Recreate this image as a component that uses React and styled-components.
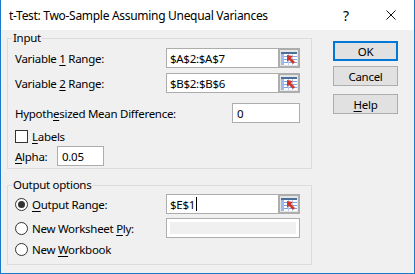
import React from 'react';
import styled, { createGlobalStyle } from 'styled-components';

const Global = createGlobalStyle`
  html, body { margin: 0; padding: 0; background: #ffffff; }
  body { font-family: "Noto Sans", "Open Sans", sans-serif; font-size: 11.5px; letter-spacing: -0.28px; color: #000; }
  * { box-sizing: border-box; }
  u { text-decoration-thickness: 1px; text-underline-offset: 2px; }
`;

const Window = styled.div`
  width: 415px;
  height: 274px;
  border: 1px solid #1979ca;
  border-top: none;
  display: flex;
  flex-direction: column;
  background: #f0f0f0;
`;

const TitleBar = styled.div`
  height: 30px;
  background: #ffffff;
  display: flex;
  align-items: center;
  padding-left: 8px;
`;

const Title = styled.div`
  font-size: 12px;
  letter-spacing: -0.3px;
  flex: 1;
  padding-top: 1px;
`;

const HelpMark = styled.div`
  font-size: 14px;
  width: 16px;
  text-align: center;
  margin-right: 32px;
`;

const CloseBox = styled.div`
  width: 10px;
  height: 10px;
  margin-right: 18px;
  display: flex;
`;

const Body = styled.div`
  flex: 1;
  display: flex;
  padding-left: 6px;
`;

const LeftCol = styled.div`
  width: 305px;
  display: flex;
  flex-direction: column;
  padding-top: 8px;
`;

const Group = styled.div`
  position: relative;
  border: 1px solid #dcdcdc;
  height: ${p => p.$h}px;
  margin-top: ${p => p.$mt || 0}px;
  padding: ${p => p.$pt}px 11px 0 7px;
  display: flex;
  flex-direction: column;
`;

const Legend = styled.span`
  position: absolute;
  top: -9px;
  left: 4px;
  padding: 0 1px;
  background: #f0f0f0;
  line-height: 16px;
`;

const Row = styled.div`
  display: flex;
  align-items: center;
  height: ${p => p.$h || 20}px;
  margin-top: ${p => p.$mt || 0}px;
`;

const Label = styled.span`
  width: ${p => (p.$w ? `${p.$w}px` : 'auto')};
  flex-shrink: 0;
  white-space: nowrap;
  margin-left: ${p => p.$ml || 0}px;
`;

const RefEdit = styled.div`
  margin-left: auto;
  width: 134px;
  height: 20px;
  display: flex;
  border: 1px solid #adadad;
  background: #ffffff;
`;

const RefText = styled.div`
  flex: 1;
  padding-left: 3px;
  display: flex;
  align-items: center;
`;

const Caret = styled.span`
  display: inline-block;
  width: 1px;
  height: 14px;
  background: #000;
  margin-left: 1px;
`;

const RefButton = styled.div`
  width: 22px;
  margin: -1px -1px -1px 0;
  border: 2px solid #adadad;
  background: #e6e6e6;
  display: flex;
  align-items: center;
  justify-content: center;
`;

const TextBox = styled.div`
  margin-left: ${p => (p.$auto ? 'auto' : '0')};
  width: ${p => p.$w}px;
  height: 20px;
  border: 1px solid #adadad;
  background: #ffffff;
  padding-left: 4px;
  display: flex;
  align-items: center;
`;

const DisabledBox = styled.div`
  margin-left: auto;
  width: 134px;
  height: 20px;
  border: 1px solid #adadad;
  background: #ffffff;
  padding: 3px 3px;
  display: flex;
`;

const DisabledFill = styled.div`
  flex: 1;
  background: #f0f0f0;
`;

const CheckBox = styled.div`
  width: 13px;
  height: 13px;
  border: 1px solid #333333;
  background: #ffffff;
  flex-shrink: 0;
`;

const Radio = styled.div`
  width: 13px;
  height: 13px;
  border-radius: 50%;
  border: 1px solid #333333;
  background: #ffffff;
  flex-shrink: 0;
  display: flex;
  align-items: center;
  justify-content: center;
  &::after {
    content: '';
    display: ${p => (p.$on ? 'block' : 'none')};
    width: 7px;
    height: 7px;
    border-radius: 50%;
    background: #333333;
  }
`;

const ButtonCol = styled.div`
  margin-left: 21px;
  width: 65px;
  padding-top: 11px;
  display: flex;
  flex-direction: column;
`;

const Button = styled.div`
  height: 20px;
  margin-top: ${p => p.$mt || 0}px;
  background: #e1e1e1;
  border: ${p => (p.$default ? '2px solid #0078d7' : '1px solid #adadad')};
  display: flex;
  align-items: center;
  justify-content: center;
`;

const RefIcon = () => (
  <svg width="16" height="13" viewBox="0 0 16 13">
    <rect x="0" y="0" width="16" height="13" fill="#ffffff" />
    <rect x="0" y="0" width="16" height="2" fill="#4d6f9c" />
    <rect x="0" y="2" width="3" height="11" fill="#9cbbe6" />
    <rect x="3" y="4" width="13" height="1" fill="#7fa6dc" />
    <rect x="3" y="7" width="13" height="1" fill="#7fa6dc" />
    <rect x="3" y="10" width="13" height="1" fill="#7fa6dc" />
    <rect x="7" y="2" width="1" height="11" fill="#b9cdea" />
    <rect x="11" y="2" width="1" height="11" fill="#b9cdea" />
    <polygon points="6,3 12,4 10,6 14,10 12,12 8,8 6,10" fill="#d2362b" />
  </svg>
);

export default function App() {
  return (
    <>
      <Global />
      <Window>
        <TitleBar>
          <Title>t-Test: Two-Sample Assuming Unequal Variances</Title>
          <HelpMark>?</HelpMark>
          <CloseBox>
            <svg width="10" height="10" viewBox="0 0 10 10">
              <path d="M0.5 0.5 L9.5 9.5 M9.5 0.5 L0.5 9.5" stroke="#111" strokeWidth="1" />
            </svg>
          </CloseBox>
        </TitleBar>
        <Body>
          <LeftCol>
            <Group $h={131} $pt={9}>
              <Legend>Input</Legend>
              <Row>
                <Label>Variable <u>1</u> Range:</Label>
                <RefEdit>
                  <RefText>$A$2:$A$7</RefText>
                  <RefButton><RefIcon /></RefButton>
                </RefEdit>
              </Row>
              <Row $mt={5}>
                <Label>Variable <u>2</u> Range:</Label>
                <RefEdit>
                  <RefText>$B$2:$B$6</RefText>
                  <RefButton><RefIcon /></RefButton>
                </RefEdit>
              </Row>
              <Row $mt={10}>
                <Label>Hypoth<u>e</u>sized Mean Difference:</Label>
                <TextBox $w={68} $auto>0</TextBox>
              </Row>
              <Row $mt={7} $h={13}>
                <CheckBox />
                <Label $ml={4}><u>L</u>abels</Label>
              </Row>
              <Row $mt={3}>
                <Label $w={42}><u>A</u>lpha:</Label>
                <TextBox $w={47}>0.05</TextBox>
              </Row>
            </Group>
            <Group $h={80} $mt={16} $pt={8}>
              <Legend>Output options</Legend>
              <Row>
                <Radio $on />
                <Label $ml={4}><u>O</u>utput Range:</Label>
                <RefEdit>
                  <RefText>$E$1<Caret /></RefText>
                  <RefButton><RefIcon /></RefButton>
                </RefEdit>
              </Row>
              <Row $mt={4}>
                <Radio />
                <Label $ml={4}>New Worksheet <u>P</u>ly:</Label>
                <DisabledBox><DisabledFill /></DisabledBox>
              </Row>
              <Row $mt={1}>
                <Radio />
                <Label $ml={4}>New <u>W</u>orkbook</Label>
              </Row>
            </Group>
          </LeftCol>
          <ButtonCol>
            <Button $default>OK</Button>
            <Button $mt={5}>Cancel</Button>
            <Button $mt={8}><span><u>H</u>elp</span></Button>
          </ButtonCol>
        </Body>
      </Window>
    </>
  );
}
